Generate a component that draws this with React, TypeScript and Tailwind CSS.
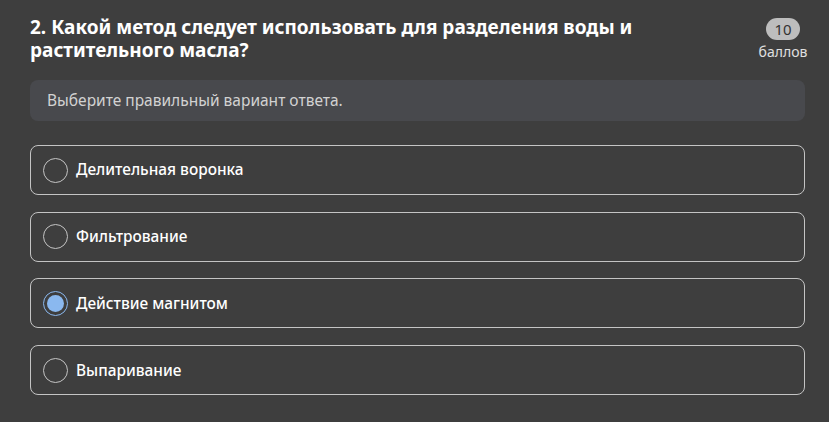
import React, { useState } from 'react';

const options = ['Делительная воронка', 'Фильтрование', 'Действие магнитом', 'Выпаривание'];

export default function App() {
  const [selected, setSelected] = useState(2);

  return (
    <div className="min-h-[422px] w-full bg-[#3e3e3e] pl-[30px] pr-[24px] pt-[16px] pb-[26px] text-white font-['Noto_Sans',sans-serif]">
      {/* Question header */}
      <div className="flex items-start justify-between">
        <h2 className="w-[640px] text-[19px] font-bold leading-[23px] text-white">
          2. Какой метод следует использовать для разделения воды и растительного масла?
        </h2>
        <div className="-mr-[3px] flex w-[50px] flex-col items-center pt-[2px]">
          <span className="rounded-full bg-[#bdbdbd] px-[8px] text-[15px] leading-[22px] text-[#333]">10</span>
          <span className="mt-[3px] text-[14px] leading-[18px] text-[#e0e0e0]">баллов</span>
        </div>
      </div>

      {/* Hint */}
      <div className="mt-[18px] rounded-[8px] bg-[#48494d] px-[17px] py-[10px] text-[15.5px] leading-[21px] text-[#d2d2d2]">
        Выберите правильный вариант ответа.
      </div>

      {/* Options */}
      <div className="mt-[24px] flex flex-col gap-[16.7px]">
        {options.map((label, i) => {
          const active = i === selected;
          return (
            <button
              key={label}
              onClick={() => setSelected(i)}
              className="flex h-[50px] items-center gap-[8px] rounded-[8px] border border-[#c4c4c4] px-[12px] text-left"
            >
              <span
                className={`flex h-[25px] w-[25px] items-center justify-center rounded-full border ${
                  active ? 'border-[#8ab8ef]' : 'border-[#c4c4c4]'
                }`}
              >
                {active && <span className="h-[17px] w-[17px] rounded-full bg-[#8ab8ef]" />}
              </span>
              <span className="text-[15.4px] font-medium text-white">{label}</span>
            </button>
          );
        })}
      </div>
    </div>
  );
}
